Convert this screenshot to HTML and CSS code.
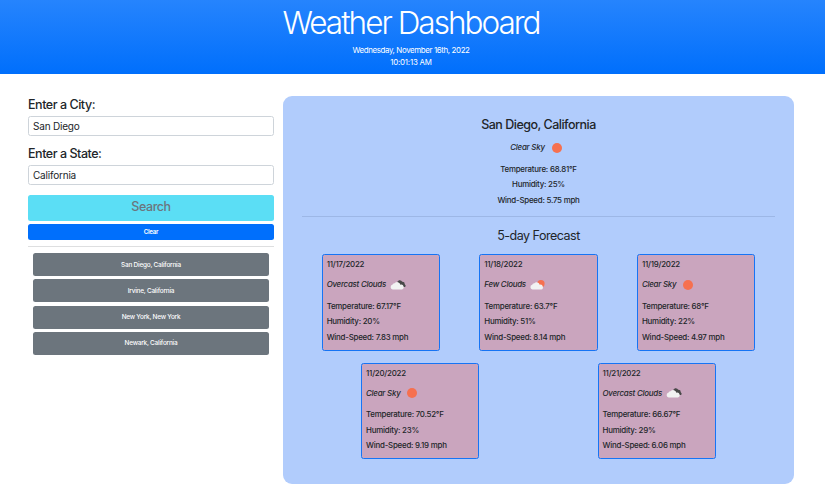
FILE: index.html
```html
<!DOCTYPE html>
<html lang="en">
<head>
<meta charset="utf-8">
<title>Weather Dashboard</title>
<link rel="stylesheet" href="styles.css">
</head>
<body>
<svg class="defs" width="0" height="0" aria-hidden="true">
  <symbol id="sun" viewBox="0 0 20 14"><circle cx="10" cy="7" r="5" fill="#f6704f"/></symbol>
  <symbol id="overcast" viewBox="0 0 20 14">
    <path d="M8.500 4.500L11 2.300a3 3 0 0 1 3.300 1.500a2.400 2.400 0 0 1 2.500 2.400a2 2 0 0 1 .4 2.800L13 9z" fill="#484848"/>
    <path d="M4.700 11.500a2.400 2.400 0 0 1-.3-4.700a2.100 2.100 0 0 1 2.300-1.500a3.200 3.200 0 0 1 5.700 1.400a2.500 2.500 0 0 1 1.500 4.800z" fill="#f2f2f2"/>
  </symbol>
  <symbol id="few" viewBox="0 0 20 14">
    <circle cx="12.900" cy="5.700" r="3.700" fill="#f6704f"/>
    <path d="M4.500 11.500a2.400 2.400 0 0 1-.3-4.700a2.100 2.100 0 0 1 2.200-1.500a3.100 3.100 0 0 1 5.300 1.500a2.400 2.400 0 0 1 1.500 4.700z" fill="#f2f2f2"/>
  </symbol>
</svg>
<header class="banner">
  <h1>Weather Dashboard</h1>
  <p>Wednesday, November 16th, 2022</p>
  <p class="clock">10:01:13 AM</p>
</header>
<main class="layout">
  <aside class="sidebar">
    <label class="label" for="city">Enter a City:</label>
    <input class="field" id="city" type="text" value="San Diego">
    <label class="label" for="state">Enter a State:</label>
    <input class="field" id="state" type="text" value="California">
    <button class="search">Search</button>
    <button class="clear">Clear</button>
    <div class="history">
      <button>San Diego, California</button>
      <button>Irvine, California</button>
      <button>New York, New York</button>
      <button>Newark, California</button>
    </div>
  </aside>
  <section class="panel">
    <div class="current">
      <h2>San Diego, California</h2>
      <p class="sky"><em>Clear Sky</em><svg class="icon"><use href="#sun"/></svg></p>
      <p>Temperature: 68.81°F</p>
      <p>Humidity: 25%</p>
      <p>Wind-Speed: 5.75 mph</p>
    </div>
    <h3>5-day Forecast</h3>
    <div class="forecast">
      <article class="card">
        <p>11/17/2022</p>
        <p class="sky"><em>Overcast Clouds</em><svg class="icon"><use href="#overcast"/></svg></p>
        <p>Temperature: 67.17°F</p><p>Humidity: 20%</p><p>Wind-Speed: 7.83 mph</p>
      </article>
      <article class="card">
        <p>11/18/2022</p>
        <p class="sky"><em>Few Clouds</em><svg class="icon"><use href="#few"/></svg></p>
        <p>Temperature: 63.7°F</p><p>Humidity: 51%</p><p>Wind-Speed: 8.14 mph</p>
      </article>
      <article class="card">
        <p>11/19/2022</p>
        <p class="sky"><em>Clear Sky</em><svg class="icon"><use href="#sun"/></svg></p>
        <p>Temperature: 68°F</p><p>Humidity: 22%</p><p>Wind-Speed: 4.97 mph</p>
      </article>
      <article class="card">
        <p>11/20/2022</p>
        <p class="sky"><em>Clear Sky</em><svg class="icon"><use href="#sun"/></svg></p>
        <p>Temperature: 70.52°F</p><p>Humidity: 23%</p><p>Wind-Speed: 9.19 mph</p>
      </article>
      <article class="card">
        <p>11/21/2022</p>
        <p class="sky"><em>Overcast Clouds</em><svg class="icon"><use href="#overcast"/></svg></p>
        <p>Temperature: 66.67°F</p><p>Humidity: 29%</p><p>Wind-Speed: 6.06 mph</p>
      </article>
    </div>
  </section>
</main>
</body>
</html>
```
FILE: styles.css
```css
* { box-sizing: border-box; }
body {
  margin: 0;
  height: 497px;
  overflow: hidden;
  background: #fff;
  color: #212529;
  font-family: Inter, "Liberation Sans", sans-serif;
  font-size: 7.9px;
  white-space: nowrap;
}
h1, h2, h3, p { margin: 0; }
.defs { position: absolute; }
.banner {
  height: 74px;
  padding: 4px 3px 0 0;
  background: linear-gradient(#2684fd, #006ffc);
  color: #fff;
  text-align: center;
}
.banner h1 {
  height: 40px;
  line-height: 38px;
  font-size: 31.500px;
  font-weight: 300;
  letter-spacing: -1.98px;
}
.banner p { height: 12px; line-height: 12px; letter-spacing: -0.37px; }
.banner .clock { letter-spacing: -0.2px; }
.layout { display: flex; gap: 9px; padding: 22px 31px 0 28px; }
.sidebar { width: 246px; display: flex; flex-direction: column; }
.label {
  height: 20px;
  line-height: 17px;
  font-size: 12.500px;
  font-weight: 500;
  letter-spacing: -0.46px;
}
.field {
  height: 20px;
  margin-bottom: 9.300px;
  padding: 0 4px;
  border: 1px solid #ced4da;
  border-radius: 2.500px;
  background: #fff;
  color: #212529;
  font: 400 10px Inter, sans-serif;
  letter-spacing: -0.3px;
}
.field { letter-spacing: -0.2px; }
button {
  padding: 0;
  border: 0;
  border-radius: 2.500px;
  font-family: inherit;
  color: #fff;
}
.search {
  height: 26px;
  padding-bottom: 3px;
  background: #5bdef5;
  color: #6c757d;
  font-size: 12.500px;
  font-weight: 500;
  letter-spacing: -0.45px;
}
.clear {
  height: 16px;
  margin-top: 3px;
  background: #006ffc;
  font-size: 6.200px;
  font-weight: 600;
  letter-spacing: -0.3px;
}
.history {
  display: grid;
  gap: 3.300px;
  margin-top: 6px;
  padding: 6.500px 5px 0;
  border-top: 1px solid #dedfe0;
}
.history button {
  height: 23px;
  background: #6c757d;
  font-size: 6.400px;
  font-weight: 500;
  letter-spacing: -0.2px;
}
.panel {
  flex: 1;
  height: 388px;
  padding: 20px 19px 0;
  border-radius: 9px;
  background: #b1ccfc;
  font-weight: 550;
  letter-spacing: -0.23px;
}
.panel p { height: 15.700px; line-height: 15.700px; }
.current {
  height: 101px;
  border-bottom: 1px solid #9db7e6;
  text-align: center;
}
.current h2 {
  height: 20.500px;
  line-height: 18px;
  font-size: 12.500px;
  font-weight: 500;
  letter-spacing: -0.5px;
}
.panel .sky {
  display: flex;
  align-items: center;
  gap: 2px;
  height: 25.900px;
  padding-bottom: 1.500px;
}
.panel .current .sky {
  justify-content: center;
  height: 25px;
  padding-bottom: 2px;
}
.icon { width: 20px; height: 14px; }
h3 {
  height: 37px;
  line-height: 38px;
  text-align: center;
  font-size: 12.500px;
  font-weight: 400;
  letter-spacing: -0.5px;
}
.forecast {
  display: flex;
  flex-wrap: wrap;
  justify-content: space-around;
  row-gap: 12px;
}
.card {
  width: 118.400px;
  height: 96.500px;
  padding: 2px 4px;
  border: 1px solid #1674f5;
  border-radius: 2.500px;
  background: #caa5be;
}
```
